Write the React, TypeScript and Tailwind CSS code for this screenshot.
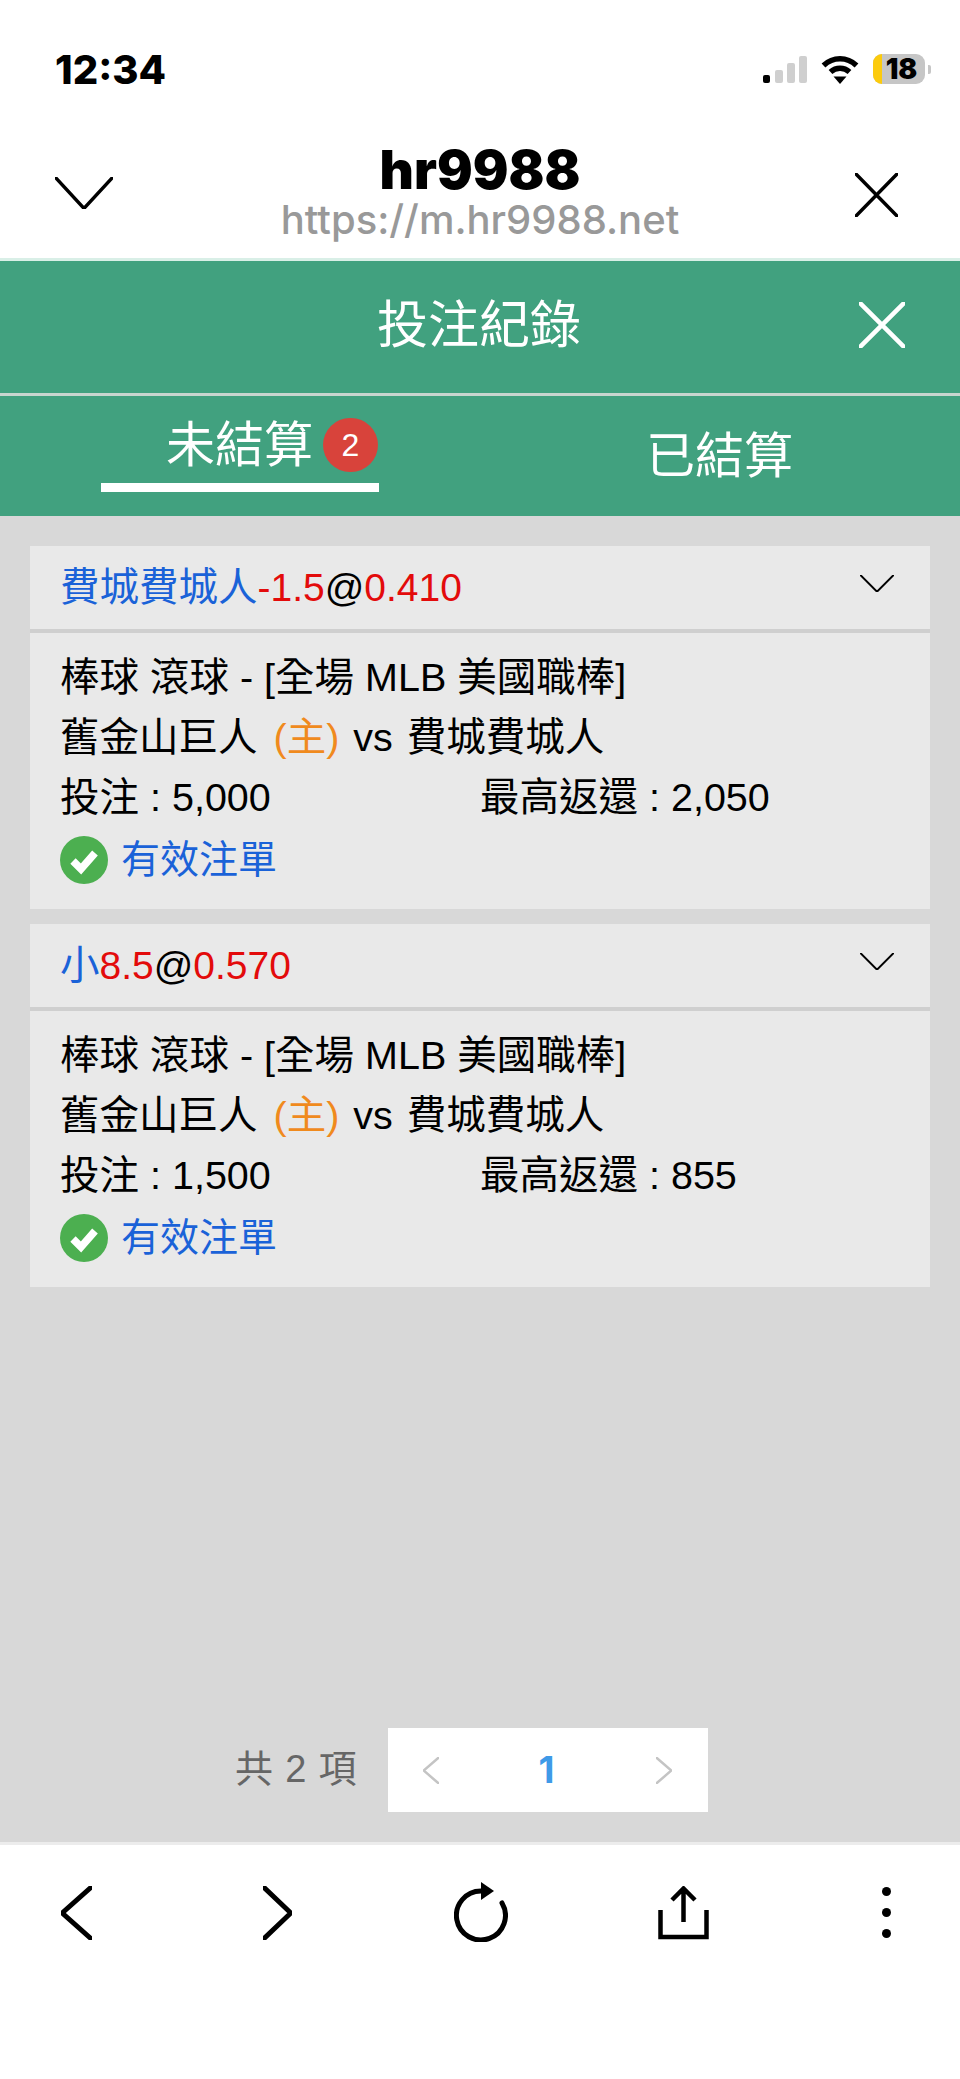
import React from "react";

const sans = "font-['Liberation_Sans','Noto_Sans_CJK_TC',sans-serif]";

function Chevron({ className, d, w = 3 }: { className: string; d: string; w?: number }) {
  return (
    <svg className={className} viewBox="0 0 100 100" fill="none" preserveAspectRatio="none">
      <path d={d} stroke="currentColor" strokeWidth={w} vectorEffect="non-scaling-stroke" strokeLinecap="round" strokeLinejoin="round" />
    </svg>
  );
}

function Card({ head, stake, ret }: { head: React.ReactNode; stake: string; ret: string }) {
  return (
    <div className="bg-[#e9e9e9] h-[363px] flex flex-col">
      <div className="h-[83px] flex items-center justify-between pl-[30px] pr-[36px]">
        <div className="text-[39.5px] leading-[50px] pb-[1px]">{head}</div>
        <Chevron className="w-[34px] h-[17px] mb-[8px] text-black" d="M2 2 L50 98 L98 2" w={2} />
      </div>
      <div className="h-[4px] bg-[#cfcfcf]" />
      <div className="pl-[30px] pt-[14px] text-[39.5px] leading-[60px] text-black flex flex-col">
        <div className="h-[60px]">棒球 滾球 - [全場 MLB 美國職棒]</div>
        <div className="h-[60px]">舊金山巨人 <span className="text-[#f08a1d] ml-[5px]">(主)</span> <span className="ml-[3px]">vs</span> <span className="ml-[3px]">費城費城人</span></div>
        <div className="h-[60px] flex">
          <div className="w-[420px]">投注 : {stake}</div>
          <div>最高返還 : {ret}</div>
        </div>
        <div className="h-[64px] pt-[1px] flex items-center gap-[13px] text-[#1a62d8] text-[39px]">
          <svg className="w-[48px] h-[48px]" viewBox="0 0 48 48">
            <circle cx="24" cy="24" r="24" fill="#4caf50" />
            <path d="M13 25 L21 33 L35 17" fill="none" stroke="#fff" strokeWidth="7.5" />
          </svg>
          <span>有效注單</span>
        </div>
      </div>
    </div>
  );
}

export default function App() {
  return (
    <div className={`w-[960px] h-[2079px] flex flex-col bg-white overflow-hidden ${sans}`}>
      {/* Browser chrome */}
      <div className="h-[258px] shrink-0 flex flex-col">
        <div className="h-[140px] flex items-start justify-between pt-[47px] pl-[55px] pr-[29px]">
          <div className="font-['Inter',sans-serif] font-extrabold text-[40px] leading-[46px] text-black">12:34</div>
          <div className="flex items-center gap-[14px] pt-[7px]">
            <svg className="w-[44px] h-[27px]" viewBox="0 0 44 27">
              <rect x="0" y="19" width="7" height="8" rx="2" fill="#000" />
              <rect x="12" y="14" width="8" height="13" rx="2" fill="#cfcfcf" />
              <rect x="24" y="7" width="8" height="20" rx="2" fill="#cfcfcf" />
              <rect x="36" y="0" width="8" height="27" rx="2" fill="#cfcfcf" />
            </svg>
            <svg className="w-[38px] h-[29px]" viewBox="0 0 38 29" fill="none">
              <path d="M2.5 10.5 C12 1.5 26 1.5 35.5 10.5" stroke="#000" strokeWidth="5.5" />
              <path d="M9.5 17 C15 12 23 12 28.5 17" stroke="#000" strokeWidth="5.5" />
              <path d="M12.5 21.5 L25.5 21.5 L19 29 Z" fill="#000" />
            </svg>
            <div className="flex items-center gap-[3px]">
              <div className="w-[52px] h-[30px] rounded-[9px] bg-[#c6c6c6] flex">
                <div className="w-[9px] rounded-l-[9px] bg-[#fccb0d]" />
                <span className="flex-1 pr-[4px] text-center font-['Inter',sans-serif] font-black text-[28px] leading-[30px] text-black">18</span>
              </div>
              <div className="w-[3px] h-[9px] rounded-r-[2px] bg-[#c6c6c6]" />
            </div>
          </div>
        </div>
        <div className="flex-1 flex items-start justify-between pl-[55px] pr-[62px]">
          <Chevron className="w-[58px] h-[32px] mt-[37px] text-black" d="M1 2 L50 98 L99 2" w={3.5} />
          <div className="flex flex-col items-center ml-[-8px] pt-[2px]">
            <div className="font-['Inter',sans-serif] font-black text-[53px] leading-[56px] text-black">hr9988</div>
            <div className="font-['Inter',sans-serif] font-medium text-[40px] leading-[44px] text-[#999999]">https://m.hr9988.net</div>
          </div>
          <Chevron className="w-[43px] h-[44px] mt-[33px] text-black" d="M2 2 L98 98 M98 2 L2 98" w={3.5} />
        </div>
      </div>
      <div className="h-[3px] shrink-0 bg-[#d9efe7]" />

      {/* Green header */}
      <div className="shrink-0 bg-[#41a17f] text-white">
        <div className="h-[132px] flex items-center justify-center relative">
          <span className="text-[51px] leading-[60px] pb-[2px] ml-[-2px]">投注紀錄</span>
          <Chevron className="absolute right-[55px] top-[41px] w-[46px] h-[46px] text-white" d="M2 2 L98 98 M98 2 L2 98" w={4.5} />
        </div>
        <div className="h-[3px] bg-[#c8d6cf]" />
        <div className="h-[120px] flex pl-[101px]">
          <div className="w-[278px] h-[96px] flex items-center pl-[65px] pt-[11px] gap-[10px] border-b-[9px] border-white mr-[267px]">
            <span className="text-[49px] leading-[56px]">未結算</span>
            <span className="w-[55px] h-[54px] rounded-full bg-[#d8433b] text-[32px] leading-[54px] text-center">2</span>
          </div>
          <span className="text-[49px] leading-[56px] mt-[32px]">已結算</span>
        </div>
      </div>

      {/* Content */}
      <div className="flex-1 bg-[#d8d8d8] flex flex-col px-[30px] pt-[30px] pb-[30px] gap-[15px]">
        <Card
          head={<><span className="text-[#1a62d8]">費城費城人</span><span className="text-[#e30b0b] text-[39px]">-1.5</span><span className="text-black text-[39px]">@</span><span className="text-[#e30b0b] text-[39px]">0.410</span></>}
          stake="5,000"
          ret="2,050"
        />
        <Card
          head={<><span className="text-[#1a62d8]">小</span><span className="text-[#e30b0b] text-[39px]">8.5</span><span className="text-black text-[39px]">@</span><span className="text-[#e30b0b] text-[39px]">0.570</span></>}
          stake="1,500"
          ret="855"
        />
        <div className="mt-auto flex items-center pl-[205px]">
          <span className="text-[38px] leading-[80px] pb-[2px] text-[#666666] w-[153px] tracking-[0.8px]">共 2 項</span>
          <div className="w-[320px] h-[84px] bg-white flex items-center justify-between pl-[35px] pr-[36px]">
            <Chevron className="w-[16px] h-[27px] text-[#c4c4c4]" d="M98 2 L4 50 L98 98" w={2.5} />
            <span className="font-['Inter',sans-serif] font-bold text-[37px] text-[#3f9ae8] ml-[-2px]">1</span>
            <Chevron className="w-[16px] h-[27px] text-[#c4c4c4]" d="M2 2 L96 50 L2 98" w={2.5} />
          </div>
        </div>
      </div>

      {/* Toolbar */}
      <div className="h-[237px] shrink-0 border-t-[3px] border-[#ececec] bg-white flex items-start pt-[37px] pl-[61px]">
        <Chevron className="w-[31px] h-[54px] mt-[4px] text-black" d="M98 2 L4 50 L98 98" w={5} />
        <Chevron className="w-[29px] h-[54px] mt-[4px] ml-[171px] text-black" d="M2 2 L96 50 L2 98" w={5} />
        <svg className="w-[54px] h-[60px] ml-[162px]" viewBox="0 0 54 60" fill="none">
          <path d="M27 9 A24.5 24.5 0 1 0 48 21" stroke="#000" strokeWidth="5" strokeLinecap="round" />
          <path d="M27 0 L40 9 L27 18 Z" fill="#000" />
        </svg>
        <svg className="w-[51px] h-[54px] mt-[4px] ml-[150px]" viewBox="0 0 51 54" fill="none" stroke="#000" strokeWidth="4.5">
          <path d="M25.5 36 L25.5 3 M14 14 L25.5 2.5 L37 14" />
          <path d="M2.5 24 L2.5 51 L48.5 51 L48.5 24" />
        </svg>
        <div className="flex flex-col gap-[12px] mt-[5px] ml-[173px]">
          <div className="w-[9px] h-[9px] rounded-full bg-black" />
          <div className="w-[9px] h-[9px] rounded-full bg-black" />
          <div className="w-[9px] h-[9px] rounded-full bg-black" />
        </div>
      </div>
    </div>
  );
}
